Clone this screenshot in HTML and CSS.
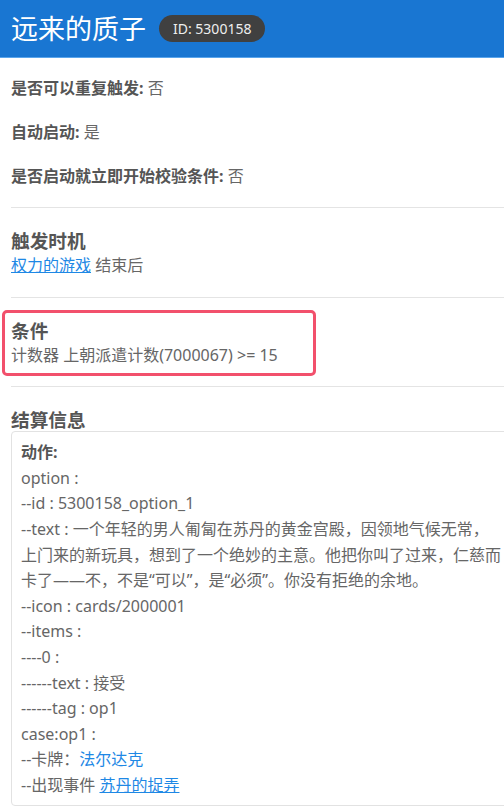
FILE: index.html
```html
<!DOCTYPE html>
<html lang="zh">
<head>
  <meta charset="UTF-8">
  <title>远来的质子</title>
  <link rel="stylesheet" href="styles.css">
</head>
<body>

  <header class="topbar">
    <h1 class="title">远来的质子</h1>
    <span class="id-badge">ID: 5300158</span>
  </header>

  <div class="content">

    <div class="section flags">
      <p><strong>是否可以重复触发:</strong> 否</p>
      <p><strong>自动启动:</strong> 是</p>
      <p><strong>是否启动就立即开始校验条件:</strong> 否</p>
    </div>

    <div class="section">
      <h3>触发时机</h3>
      <div class="line"><a href="#">权力的游戏</a> 结束后</div>
    </div>

    <div class="section">
      <div class="highlight">
        <h3>条件</h3>
        <div class="line">计数器 上朝派遣计数(7000067) &gt;= 15</div>
      </div>
    </div>

    <div class="section last">
      <h3>结算信息</h3>
      <div class="result-box">
        <div class="line"><strong>动作:</strong></div>
        <div class="line">option :</div>
        <div class="line">--id : 5300158_option_1</div>
        <div class="line">--text : 一个年轻的男人匍匐在苏丹的黄金宫殿，因领地气候无常，</div>
        <div class="line">上门来的新玩具，想到了一个绝妙的主意。他把你叫了过来，仁慈而</div>
        <div class="line">卡了——不，不是“可以”，是“必须”。你没有拒绝的余地。</div>
        <div class="line">--icon : cards/2000001</div>
        <div class="line">--items :</div>
        <div class="line">----0 :</div>
        <div class="line">------text : 接受</div>
        <div class="line">------tag : op1</div>
        <div class="line">case:op1 :</div>
        <div class="line">--卡牌：<a href="#" class="plain">法尔达克</a></div>
        <div class="line">--出现事件 <a href="#">苏丹的捉弄</a></div>
      </div>
    </div>

  </div>

</body>
</html>
```

FILE: styles.css
```css
html {
  overflow: hidden;
}
body {
  margin: 0;
  font-family: "Noto Sans", "Noto Sans CJK SC", sans-serif;
  font-size: 16px;
  color: #666;
  background: #fff;
}
.topbar {
  display: flex;
  align-items: center;
  gap: 13px;
  padding: 0 11px 14px;
  box-sizing: border-box;
  height: 58px;
  background-color: #1976d2;
  border-bottom: 1px solid #5aa5ec;
}
.title {
  margin: 0;
  font-size: 27px;
  font-weight: normal;
  color: #fff;
  line-height: 30px;
  padding-top: 14px;
}
.id-badge {
  margin-top: 14px;
  height: 27px;
  line-height: 27px;
  padding: 0 14px;
  border-radius: 14px;
  background: #404040;
  color: #eee;
  font-size: 14px;
}
.content {
  width: 640px;
  padding-left: 11px;
}
.section {
  padding: 20px 0 18px;
  border-bottom: 1px solid #e4e4e4;
}
.section.last {
  border-bottom: none;
  padding-bottom: 0;
}
.flags {
  padding: 16px 0 1px;
}
.flags p {
  margin: 0 0 16px;
  line-height: 28px;
}
strong {
  color: #555;
}
h3 {
  margin: 0;
  font-size: 18.7px;
  line-height: 25px;
  color: #555;
}
.line {
  line-height: 25.6px;
  white-space: nowrap;
}
a {
  color: #1e88e5;
}
a.plain {
  text-decoration: none;
}
.highlight {
  width: 314px;
  box-sizing: border-box;
  margin: -8px 0 -8px -9px;
  padding: 5px 6px 5px;
  border: 3px solid #f2506c;
  border-radius: 5px;
}
.result-box {
  margin-top: -1px;
  padding: 8px 9px 6px;
  border: 1px solid #e2e2e2;
  border-radius: 4px;
}
```
